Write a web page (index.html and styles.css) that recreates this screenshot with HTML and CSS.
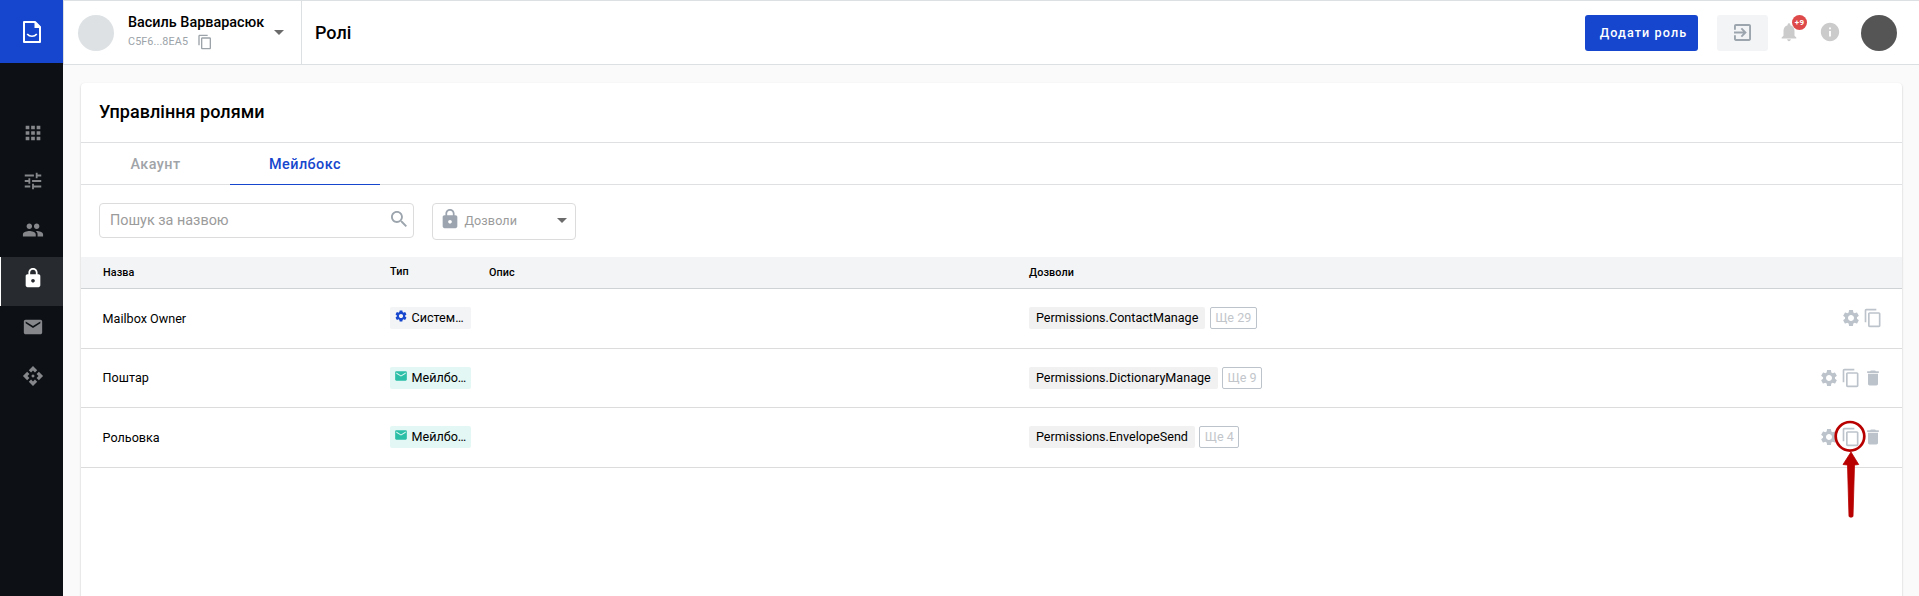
FILE: index.html
```html
<!DOCTYPE html>
<html lang="uk">
<head>
<meta charset="utf-8">
<title>Ролі</title>
<link rel="stylesheet" href="styles.css">
</head>
<body>
<svg class="sprite" aria-hidden="true">
  <symbol id="copy" viewBox="0 0 24 24"><path d="M16 1H4c-1.100 0-2 .9-2 2v14h2V3h12V1zm3 4H8c-1.100 0-2 .9-2 2v14c0 1.100.9 2 2 2h11c1.100 0 2-.9 2-2V7c0-1.100-.9-2-2-2zm0 16H8V7h11v14z"/></symbol>
  <symbol id="gear" viewBox="0 0 24 24"><path d="M19.140 12.940c.04-.3.06-.61.06-.94 0-.32-.02-.64-.07-.94l2.030-1.580c.18-.14.23-.41.12-.61l-1.920-3.320c-.12-.22-.37-.29-.59-.22l-2.390.96c-.5-.38-1.030-.7-1.620-.94l-.36-2.540c-.04-.24-.24-.41-.48-.41h-3.840c-.24 0-.43.17-.47.41l-.36 2.540c-.59.24-1.130.57-1.620.94l-2.390-.96c-.22-.08-.47 0-.59.22L2.740 8.870c-.12.21-.08.47.12.61l2.030 1.580c-.05.3-.09.63-.09.94s.02.64.07.94l-2.030 1.580c-.18.14-.23.41-.12.61l1.920 3.320c.12.22.37.29.59.22l2.390-.96c.5.38 1.030.7 1.620.94l.36 2.540c.05.24.24.41.48.41h3.840c.24 0 .44-.17.47-.41l.36-2.540c.59-.24 1.130-.56 1.620-.94l2.390.96c.22.08.47 0 .59-.22l1.920-3.320c.12-.22.07-.47-.12-.61l-2.010-1.580zM12 15.600c-1.980 0-3.600-1.620-3.600-3.600s1.620-3.600 3.600-3.600 3.600 1.620 3.600 3.600-1.620 3.600-3.600 3.600z"/></symbol>
  <symbol id="trash" viewBox="0 0 24 24"><path d="M6 19c0 1.100.9 2 2 2h8c1.100 0 2-.9 2-2V7H6v12zM19 4h-3.500l-1-1h-5l-1 1H5v2h14V4z"/></symbol>
  <symbol id="mail" viewBox="0 0 24 24"><path d="M20 4H4c-1.100 0-1.990.9-1.990 2L2 18c0 1.100.9 2 2 2h16c1.100 0 2-.9 2-2V6c0-1.100-.9-2-2-2zm0 4l-8 5-8-5V6l8 5 8-5v2z"/></symbol>
  <symbol id="lock" viewBox="0 0 24 24"><path d="M18 8h-1V6c0-2.760-2.240-5-5-5S7 3.240 7 6v2H6c-1.100 0-2 .9-2 2v10c0 1.100.9 2 2 2h12c1.100 0 2-.9 2-2V10c0-1.100-.9-2-2-2zm-6 9c-1.100 0-2-.9-2-2s.9-2 2-2 2 .9 2 2-.9 2-2 2zm3.100-9H8.900V6c0-1.710 1.390-3.100 3.100-3.100s3.100 1.390 3.100 3.100v2z"/></symbol>
</svg>

<div class="app">
  <nav class="sidebar">
    <a class="logo">
      <svg width="18" height="22" viewBox="0 0 18 22" fill="none" stroke="#fff"><path d="M1 1h11l5 5v15H1z" stroke-width="2" stroke-linejoin="round"/><path d="M11.500 1v6H17V5.500L12.500 1z" fill="#fff" stroke="none"/><path d="M4.200 13c2.500 3 7.100 3 9.600 0" stroke-width="1.700"/></svg>
    </a>
    <div class="menu">
      <a class="menu-item"><svg class="i22" viewBox="0 0 24 24"><path d="M4 8h4V4H4v4zm6 12h4v-4h-4v4zm-6 0h4v-4H4v4zm0-6h4v-4H4v4zm6 0h4v-4h-4v4zm6-10v4h4V4h-4zm-6 4h4V4h-4v4zm6 6h4v-4h-4v4zm0 6h4v-4h-4v4z"/></svg></a>
      <a class="menu-item"><svg class="i22" viewBox="0 0 24 24"><path d="M3 17v2h6v-2H3zM3 5v2h10V5H3zm10 16v-2h8v-2h-8v-2h-2v6h2zM7 9v2H3v2h4v2h2V9H7zm14 4v-2H11v2h10zm-6-4h2V7h4V5h-4V3h-2v6z"/></svg></a>
      <a class="menu-item"><svg class="i22" viewBox="0 0 24 24"><path d="M16 11c1.660 0 2.990-1.340 2.990-3S17.660 5 16 5s-3 1.340-3 3 1.340 3 3 3zm-8 0c1.660 0 2.990-1.340 2.990-3S9.660 5 8 5 5 6.340 5 8s1.340 3 3 3zm0 2c-2.330 0-7 1.170-7 3.500V19h14v-2.500c0-2.330-4.670-3.500-7-3.500zm8 0c-.29 0-.62.02-.97.05 1.160.84 1.970 1.970 1.970 3.450V19h6v-2.500c0-2.330-4.670-3.500-7-3.500z"/></svg></a>
      <a class="menu-item active"><svg class="i22"><use href="#lock"/></svg></a>
      <a class="menu-item"><svg class="i22"><use href="#mail"/></svg></a>
      <a class="menu-item"><svg class="i22" viewBox="0 0 24 24"><path d="M14 12l-2 2-2-2 2-2 2 2zm-2-6l2.120 2.120 2.500-2.500L12 1 7.380 5.620l2.500 2.500L12 6zm-6 6l2.120-2.120-2.500-2.500L1 12l4.620 4.620 2.500-2.500L6 12zm12 0l-2.120 2.120 2.500 2.500L23 12l-4.620-4.620-2.500 2.500L18 12zm-6 6l-2.120-2.120-2.500 2.500L12 23l4.620-4.620-2.500-2.500L12 18z"/></svg></a>
    </div>
  </nav>

  <div class="page">
    <header class="topbar">
      <div class="account">
        <span class="avatar"></span>
        <div class="who">
          <div class="name">Василь Варварасюк</div>
          <div class="code"><span>C5F6...8EA5</span><svg class="i16"><use href="#copy"/></svg></div>
        </div>
        <i class="caret"></i>
      </div>
      <h1 class="title">Ролі</h1>
      <div class="tools">
        <button class="add">Додати роль</button>
        <button class="exit"><svg width="17" height="17" viewBox="3 3 18 18"><path d="M10.090 15.590L11.500 17l5-5-5-5-1.410 1.410L12.670 11H3v2h9.670l-2.580 2.590zM19 3H5c-1.110 0-2 .9-2 2v4h2V5h14v14H5v-4H3v4c0 1.100.89 2 2 2h14c1.100 0 2-.9 2-2V5c0-1.100-.9-2-2-2z"/></svg></button>
        <span class="bell"><svg class="i22" viewBox="0 0 24 24"><path d="M12 22c1.100 0 2-.9 2-2h-4c0 1.100.89 2 2 2zm6-6v-5c0-3.070-1.640-5.640-4.500-6.320V4c0-.83-.67-1.500-1.500-1.500s-1.500.67-1.500 1.500v.68C7.630 5.360 6 7.920 6 11v5l-2 2v1h16v-1l-2-2z"/></svg><b class="badge">+9</b></span>
        <svg class="i22 info" viewBox="0 0 24 24"><path d="M12 2C6.480 2 2 6.480 2 12s4.480 10 10 10 10-4.480 10-10S17.520 2 12 2zm1 15h-2v-6h2v6zm0-8h-2V7h2v2z"/></svg>
        <span class="avatar dark"></span>
      </div>
    </header>

    <main class="card">
      <h2 class="card-title">Управління ролями</h2>
      <div class="tabs"><a class="tab">Акаунт</a><a class="tab on">Мейлбокс</a></div>
      <div class="filters">
        <div class="search"><span>Пошук за назвою</span><svg width="16" height="16" viewBox="3 3 17.500 17.500"><path d="M15.500 14h-.79l-.28-.27C15.410 12.590 16 11.110 16 9.500 16 5.910 13.090 3 9.500 3S3 5.910 3 9.500 5.910 16 9.500 16c1.610 0 3.090-.59 4.230-1.570l.27.28v.79l5 4.990L20.490 19l-4.990-5zm-6 0C7.010 14 5 11.990 5 9.500S7.010 5 9.500 5 14 7.010 14 9.500 11.990 14 9.500 14z"/></svg></div>
        <div class="select"><svg class="i22"><use href="#lock"/></svg><span>Дозволи</span><i class="caret"></i></div>
      </div>
      <div class="row head"><span>Назва</span><span class="type-head">Тип</span><span>Опис</span><span>Дозволи</span></div>
      <div class="row first">
        <span class="role">Mailbox Owner</span>
        <span class="chip sys"><svg class="i14"><use href="#gear"/></svg>Систем…</span>
        <span></span>
        <span class="perms"><span class="perm">Permissions.ContactManage</span><span class="more">Ще 29</span></span>
        <span class="actions"><svg><use href="#gear"/></svg><svg><use href="#copy"/></svg></span>
      </div>
      <div class="row second">
        <span class="role">Поштар</span>
        <span class="chip box"><svg class="i14"><use href="#mail"/></svg>Мейлбо…</span>
        <span></span>
        <span class="perms"><span class="perm">Permissions.DictionaryManage</span><span class="more">Ще 9</span></span>
        <span class="actions"><svg><use href="#gear"/></svg><svg><use href="#copy"/></svg><svg><use href="#trash"/></svg></span>
      </div>
      <div class="row third">
        <span class="role">Рольовка</span>
        <span class="chip box"><svg class="i14"><use href="#mail"/></svg>Мейлбо…</span>
        <span></span>
        <span class="perms"><span class="perm">Permissions.EnvelopeSend</span><span class="more">Ще 4</span></span>
        <span class="actions"><svg><use href="#gear"/></svg><svg><use href="#copy"/></svg><svg><use href="#trash"/></svg></span>
      </div>
    </main>
  </div>
</div>
<svg class="pointer" width="34" height="100" viewBox="1834 420 34 100"><circle cx="1850" cy="436.300" r="14.300" fill="none" stroke="#b80000" stroke-width="2.700"/><path d="M1851 452L1858.700 464.500L1854.500 465L1853 516.500Q1851 518 1849 516.500L1847.500 465L1843 464.500Z" fill="#b80000" stroke="#b80000" stroke-width=".8" stroke-linejoin="round"/></svg>
</body>
</html>
```
FILE: styles.css
```css
* { box-sizing: border-box; }
body { margin: 0; height: 596px; overflow: hidden; background: #fafafa; color: #000; font-family: Roboto, "Liberation Sans", sans-serif; }
svg { display: block; fill: currentColor; flex: none; }
.sprite { display: none; }
.i22 { width: 22px; height: 22px; }
.i16 { width: 16px; height: 16px; }
.i14 { width: 14px; height: 14px; }
button { border: 0; padding: 0; font-family: inherit; }

.app { display: flex; height: 596px; }
.sidebar { width: 63px; flex: none; background: #0d1115; color: #85878a; }
.logo { display: flex; width: 63px; height: 63px; padding: 21px 0 0 23px; background: #1546cd; }
.logo svg { fill: none; }
.menu { padding-top: 48px; }
.menu-item { display: flex; height: 48.700px; padding: 11px 0 0 21.500px; }
.menu-item:nth-child(2) { padding-top: 10.500px; }
.menu-item.active { height: 49px; padding-top: 10px; background: #272b2f; color: #fff; border-left: 1px solid #fff; padding-left: 20.500px; }
.menu-item.active ~ .menu-item { padding-top: 10px; }

.page { flex: 1; min-width: 0; display: flex; flex-direction: column; }
.topbar { display: flex; flex: none; height: 65px; background: #fff; border: 1px solid #dde0e3; border-right: 0; }
.account { display: flex; width: 238px; padding: 14px 0 0 14px; border-right: 1px solid #dde0e3; }
.avatar { width: 36px; height: 36px; border-radius: 50%; background: #dde1e4; flex: none; }
.avatar.dark { background: #555; margin-left: 20px; }
.who { margin-left: 14px; width: 146px; }
.name { font-size: 14.400px; font-weight: 500; line-height: 16px; white-space: nowrap; }
.code { display: flex; align-items: flex-start; gap: 9px; font-size: 10.800px; line-height: 21px; letter-spacing: .1px; color: #9ca3a9; }
.code svg { margin-top: 3px; }
.caret { width: 0; height: 0; border: 5px solid transparent; border-top-color: #6b6b6b; border-bottom: 0; margin-top: 15px; }
.title { margin: 0 0 0 13px; font-size: 18px; font-weight: 500; line-height: 63px; }
.tools { display: flex; margin-left: auto; padding: 14px 22px 0 0; }
.add { width: 113px; height: 36px; border-radius: 3px; background: #1546cd; color: #fff; font-size: 12.600px; font-weight: 500; letter-spacing: 1.100px; white-space: nowrap; padding: 0 0 2px 4px; }
.exit { width: 51px; height: 36px; margin-left: 19px; border-radius: 3px; background: #f3f4f6; color: #9ca5ad; display: grid; place-items: center; padding-bottom: 1px; }
.bell { position: relative; margin: 6px 0 0 10px; color: #cbcbcb; }
.badge { position: absolute; left: 14px; top: -6px; width: 15px; height: 15px; border-radius: 50%; background: #de4a4a; color: #fff; font-size: 8px; line-height: 15px; text-align: center; letter-spacing: .3px; }
.info { margin: 6px 0 0 19px; color: #cbcbcb; }

.card { flex: 1; margin: 18px 17px 0 18px; background: #fff; border-radius: 4px 4px 0 0; box-shadow: 0 1px 2px rgba(0,0,0,.25); }
.card-title { margin: 0; height: 60px; padding: 0 18px; border-bottom: 1px solid #dee0e2; font-size: 18px; font-weight: 500; line-height: 58px; letter-spacing: .03px; }
.tabs { display: flex; height: 42px; border-bottom: 1px solid #dee0e2; }
.tab { width: 149px; height: 42px; text-align: center; line-height: 43px; font-size: 14.400px; font-weight: 500; letter-spacing: .43px; color: #a0a4a8; }
.tab.on { width: 150px; color: #1546cd; border-bottom: 1px solid #1546cd; }
.filters { display: flex; height: 72px; padding: 18px; gap: 18px; }
.search { display: flex; width: 315px; height: 35px; padding: 0 6.500px 0 10px; border: 1px solid #dcdcdc; border-radius: 4px; justify-content: space-between; font-size: 14.400px; line-height: 33px; color: #9b9b9b; }
.search svg { margin-top: 7px; color: #9ca5ad; }
.select { display: flex; width: 144px; height: 37px; padding: 4px 0 0 6px; border: 1px solid #dcdcdc; border-radius: 4px; color: #9b9b9b; font-size: 12.600px; line-height: 26px; }
.select svg { color: #9ca5af; }
.select span { width: 92px; margin-left: 3.500px; letter-spacing: .1px; }
.select .caret { margin-top: 10px; }

.row { display: grid; grid-template-columns: 287px 99px 540px 1fr auto; align-items: start; height: 60px; padding: 18px 20px 0 22px; border-bottom: 1px solid #dcdcdc; }
.row.second { height: 59px; }
.row.head { height: 32px; padding-top: 8px; background: #f3f4f6; border-bottom-color: #cfd2d5; font-size: 10.800px; font-weight: 500; line-height: 16px; letter-spacing: .1px; }
.type-head { line-height: 14px; }
.role { font-size: 12.600px; line-height: 24px; margin-left: -.4px; }
.second .role { line-height: 22px; }
.chip { display: flex; width: 81px; height: 22px; padding-left: 4px; gap: 3.500px; border-radius: 2px; font-size: 12.600px; line-height: 22px; white-space: nowrap; }
.chip svg { margin-top: 2px; }
.sys { background: #f3f4f6; }
.sys svg { color: #1546cd; }
.box { background: #e3f7f4; }
.box svg { color: #2bbfa7; }
.perms { display: flex; gap: 4.500px; font-size: 12.600px; line-height: 22px; white-space: nowrap; }
.perm { height: 22px; padding: 0 7px; background: #f1f1f1; border-radius: 2px; }
.more { height: 22px; padding: 0 4.300px; line-height: 20px; border: 1px solid #bdc3cb; border-radius: 2px; color: #c2c6cb; }
.actions { display: flex; gap: 1.600px; color: #bdc3cb; margin: 1px -.5px 0 0; }
.actions svg { width: 20px; height: 20px; }

.pointer { position: absolute; left: 1834px; top: 420px; }
```
